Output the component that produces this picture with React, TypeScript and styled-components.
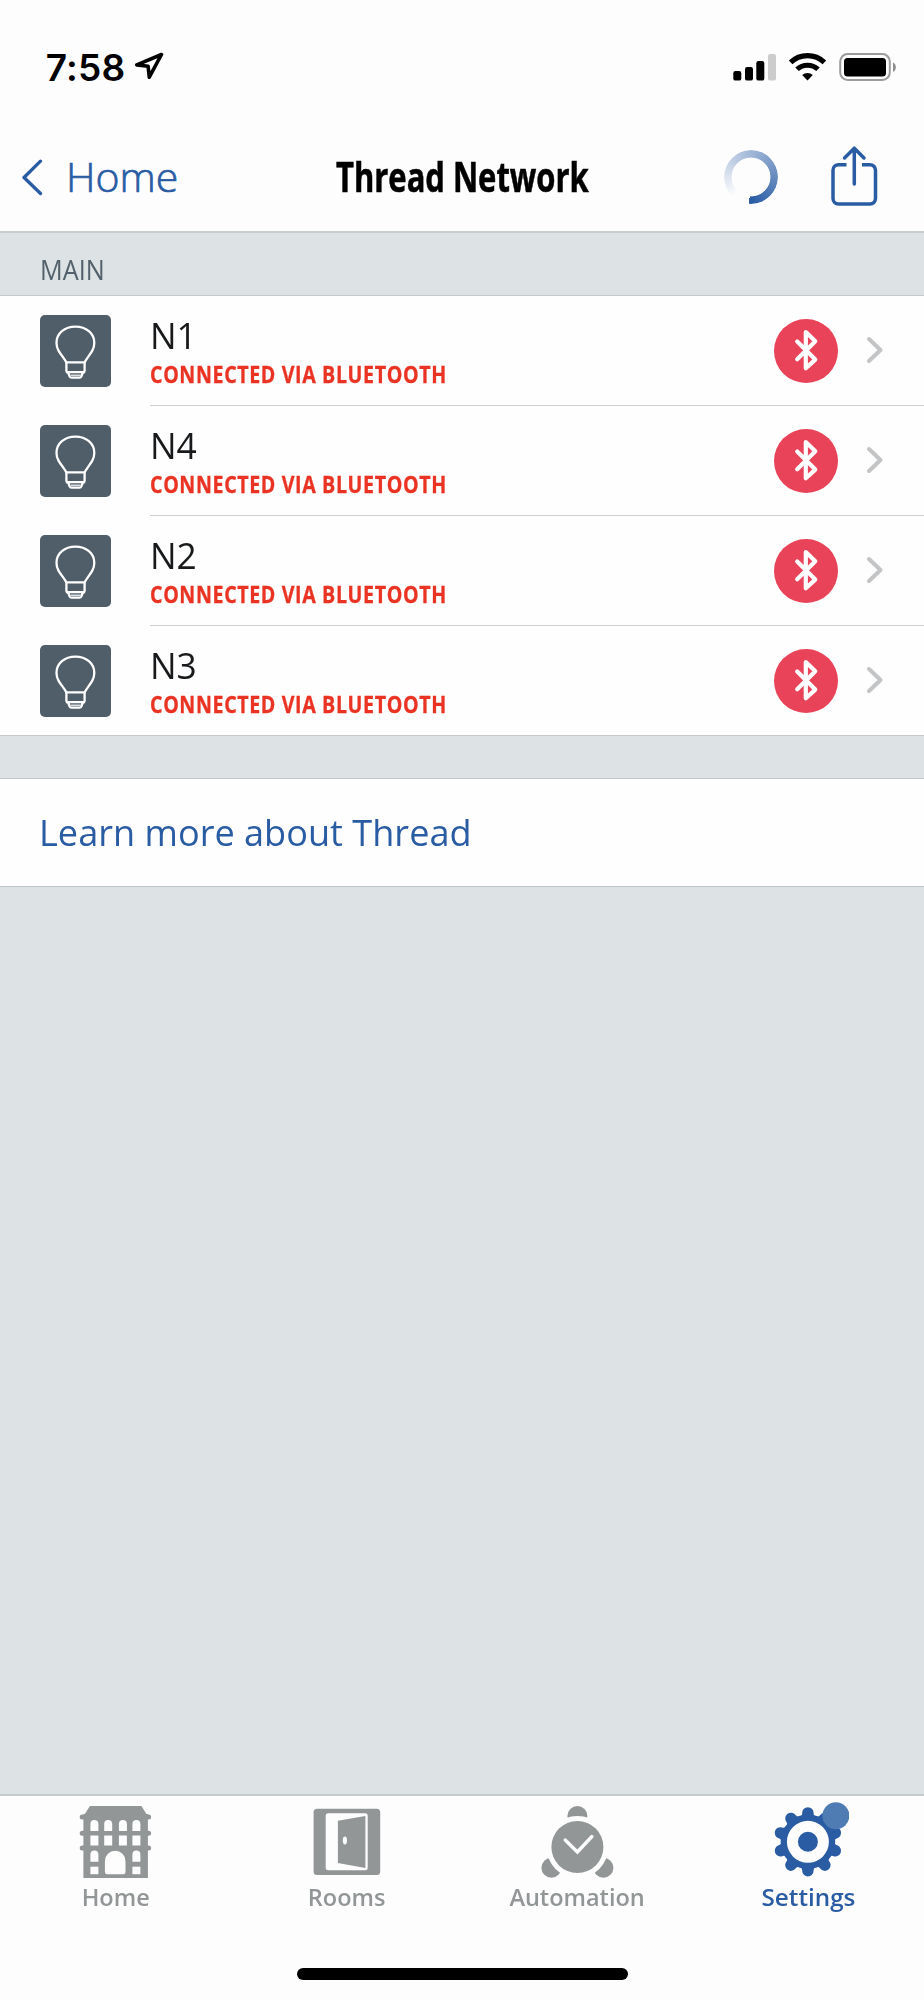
import React from "react";
import styled, { createGlobalStyle } from "styled-components";

const blue = "#2a5ca4";
const grey = "#929697";

const Global = createGlobalStyle`
  * { box-sizing: border-box; }
  body { margin: 0; background: #dde2e4; font-family: "Open Sans", "Noto Sans", sans-serif; }
`;

const Screen = styled.div`
  width: 924px;
  height: 2000px;
  display: flex;
  flex-direction: column;
  background: #dde2e4;
  overflow: hidden;
`;

const Header = styled.header`
  height: 233px;
  background: #fdfdfe;
  border-bottom: 2px solid #c8cdce;
`;

const StatusBar = styled.div`
  height: 122px;
  padding: 45px 28px 0 45.7px;
  display: flex;
  align-items: flex-start;
  justify-content: space-between;
`;

const Clock = styled.div`
  display: flex;
  gap: 9px;
  font: 600 37px/45px Inter, sans-serif;
  letter-spacing: 0.2px;
  color: #000;
`;

const StatusGlyphs = styled.svg`
  margin-top: 6px;
`;

const NavBar = styled.nav`
  height: 109px;
  padding: 0 46px 0 22px;
  display: grid;
  grid-template-columns: 260px 1fr 236px;
`;

const Stretch = styled.span<{ $x: number; $origin?: string }>`
  display: inline-block;
  white-space: nowrap;
  transform: scaleX(${(p) => p.$x});
  transform-origin: ${(p) => p.$origin ?? "left"} center;
`;

const Back = styled.div`
  display: flex;
  align-items: flex-start;
  gap: 23px;
  padding-top: 26px;
  font-size: 41px;
  font-weight: 300;
  line-height: 56px;
  color: ${blue};
  -webkit-text-stroke: 0.7px ${blue};
  svg { margin-top: 11px; }
`;

const Title = styled.h1`
  margin: 0;
  padding-top: 26px;
  display: flex;
  justify-content: center;
  font-size: 41px;
  font-weight: 700;
  line-height: 56px;
  color: #000;
  -webkit-text-stroke: 0.6px #000;
`;

const Actions = styled.div`
  display: flex;
  justify-content: flex-end;
  gap: 52px;
  padding-top: 23px;
`;

const Spinner = styled.div`
  width: 54px;
  height: 54px;
  margin-top: 4.5px;
  border-radius: 50%;
  background: conic-gradient(from 184deg, rgba(42, 92, 164, 0) 38deg, ${blue} 356deg);
  mask: radial-gradient(circle, transparent 19px, #000 19.8px);
`;

const SectionTitle = styled.div`
  height: 63px;
  padding: 18.5px 39.5px 0;
  border-bottom: 1px solid #c5cacc;
  font-size: 27px;
  line-height: 36px;
  color: #52616c;
`;

const List = styled.div`
  background: #fefefe;
  border-bottom: 1px solid #c4c8ca;
`;

const Row = styled.div`
  height: 110px;
  padding-left: 39.5px;
  display: flex;
  align-items: flex-start;
  &:last-child { height: 109px; }
`;

const DeviceIcon = styled.div`
  width: 71.5px;
  height: 71.5px;
  margin: 19px 39px 0 0;
  border-radius: 5px;
  background: #505e69;
`;

const RowBody = styled.div`
  flex: 1;
  height: 100%;
  display: flex;
  border-bottom: 1px solid #cfd0d1;
  ${Row}:last-child & { border-bottom: 0; }
`;

const Names = styled.div`
  flex: 1;
  padding-top: 17px;
`;

const Name = styled.div`
  font-size: 37px;
  line-height: 44px;
  color: #17191b;
`;

const Status = styled.div`
  margin-top: 4px;
  font-size: 22.5px;
  font-weight: 700;
  line-height: 28px;
  letter-spacing: 0.7px;
  color: #ea3323;
  -webkit-text-stroke: 0.3px #ea3323;
`;

const Badge = styled.div`
  width: 64.6px;
  height: 64.6px;
  margin: 22.5px 27.6px 0 0;
  border-radius: 50%;
  background: #e94359;
`;

const Disclosure = styled.svg`
  margin: 40px 40px 0 0;
`;

const LearnMore = styled.div`
  height: 109px;
  margin-top: 42px;
  padding: 25px 39px 0;
  border-top: 1px solid #bfc4c7;
  border-bottom: 1px solid #bfc4c7;
  background: #fefefe;
  font-size: 37px;
  line-height: 56px;
  color: ${blue};
`;

const TabBar = styled.footer`
  height: 206px;
  margin-top: auto;
  border-top: 2px solid #c5cacd;
  background: #fdfdfe;
  display: flex;
  flex-direction: column;
  align-items: center;
`;

const Tabs = styled.div`
  width: 100%;
  height: 172px;
  display: grid;
  grid-template-columns: repeat(4, 1fr);
`;

const Tab = styled.div<{ $active?: boolean }>`
  padding-top: 4px;
  display: flex;
  flex-direction: column;
  align-items: center;
  color: ${(p) => (p.$active ? blue : grey)};
  font-size: 24px;
  font-weight: 600;
  line-height: 30px;
  svg { margin-bottom: 2px; }
`;

const HomeIndicator = styled.div`
  width: 331px;
  height: 12px;
  border-radius: 6px;
  background: #000;
`;

const Location = () => (
  <svg width="31" height="34" viewBox="0 0 31 34">
    <path d="M27.500 9.500 2.800 19.900 14.100 21.200 15.300 32.200Z" fill="none" stroke="#000" strokeWidth="3.600" strokeLinejoin="round" />
  </svg>
);

const StatusIcons = () => (
  <StatusGlyphs width="166" height="32" viewBox="730 51 166 32">
    <rect x="733.3" y="71" width="8" height="9.6" rx="2.2" />
    <rect x="745" y="67" width="8" height="13.6" rx="2.2" />
    <rect x="756.3" y="61" width="8" height="19.6" rx="2.2" />
    <rect x="768" y="54" width="8" height="26.6" rx="2.2" fill="#cccccd" />
    <path d="M790.6 62.4a24.5 24.5 0 0 1 33.8 0" fill="none" stroke="#000" strokeWidth="5.2" />
    <path d="M797 69.3a15.3 15.3 0 0 1 21 0" fill="none" stroke="#000" strokeWidth="5" />
    <path d="M802.2 75a8 8 0 0 1 10.6 0l-5.3 5.5z" />
    <rect x="840.2" y="54" width="49.6" height="26" rx="7.5" fill="none" stroke="#9b9d9c" strokeWidth="2" />
    <rect x="844" y="58" width="42" height="18.6" rx="3.6" />
    <path d="M893 62.5c3.8 1.4 3.8 7.9 0 9.3z" fill="#8d8f8e" />
  </StatusGlyphs>
);

const BackArrow = () => (
  <svg width="21" height="37" viewBox="0 0 21 37">
    <path d="M18.500 2.200 2 18.500 18.500 34.500" fill="none" stroke={blue} strokeWidth="3.300" strokeLinecap="round" strokeLinejoin="round" />
  </svg>
);

const Share = () => (
  <svg width="48" height="62" viewBox="0 0 48 62" fill="none" stroke={blue} strokeWidth="3.500" strokeLinecap="round" strokeLinejoin="round">
    <path d="M16.500 19.700H8.500A5.500 5.500 0 0 0 3 25.200V53.500A5.500 5.500 0 0 0 8.500 59H40A5.500 5.500 0 0 0 45.500 53.500V25.200A5.500 5.500 0 0 0 40 19.700H32" strokeLinecap="butt" />
    <path d="M24.300 39V3.500M14.500 13 24.300 3.200 34 13" />
  </svg>
);

const Bulb = () => (
  <svg width="72" height="72" viewBox="0.4 -0.4 72 72" fill="none" stroke="#fff" strokeWidth="2.300" strokeLinejoin="round">
    <path d="M26.800 47C25 43.500 21 39 18.900 35.200C17.500 32.600 16.900 30 16.900 27.500C16.900 18 25 11.300 35.800 11.300C46.600 11.300 54.700 18 54.700 27.500C54.700 30 54.100 32.600 52.700 35.200C50.600 39 46.800 43.500 45 47Z" />
    <path d="M26.800 47V55Q26.800 57 28.800 57.600L30 61Q30.500 62.300 32 62.300H39.800Q41.300 62.300 41.800 61L43 57.600Q45 57 45 55V47M28 56.800H44" />
    <path d="M31 59.800H41" strokeWidth="1.200" />
  </svg>
);

const Bluetooth = () => (
  <svg width="65" height="65" viewBox="0 0 65 65">
    <path d="M23.200 22.500 41.300 40.600 31.800 49.300V13L41.300 22.300 23.200 40.200" fill="none" stroke="#fff" strokeWidth="4.200" strokeLinecap="round" strokeLinejoin="round" />
  </svg>
);

const HomeIcon = () => (
  <svg width="80" height="80" viewBox="0.6 0 80 80">
    <g fill={grey}>
      <path d="M14.500 6H66L71 14H72.500V78H8V14H9.500Z" />
      <rect x="4.300" y="14.500" width="71.400" height="5" rx="2.500" />
      <rect x="4.300" y="30.700" width="71.400" height="5" rx="2.500" />
      <rect x="4.300" y="45.500" width="71.400" height="5" rx="2.500" />
    </g>
    <g fill="#fdfdfe">
      {[15, 28.8, 43.5, 57].map((x) => (
        <React.Fragment key={x}>
          <path d={`M${x} 31V24a4 4 0 0 1 8 0v7z`} />
          <rect x={x} y="35.500" width="8" height="10" />
        </React.Fragment>
      ))}
      {[15, 57].map((x) => (
        <React.Fragment key={x}>
          <path d={`M${x} 61.700V54.500a4 4 0 0 1 8 0v7.200z`} />
          <rect x={x} y="66.700" width="8" height="7.500" />
        </React.Fragment>
      ))}
      <path d="M29.500 72V61a10.300 10.300 0 0 1 20.600 0V72a2.300 2.300 0 0 1-2.300 2.300h-16a2.300 2.300 0 0 1-2.300-2.300z" />
    </g>
  </svg>
);

const RoomsIcon = () => (
  <svg width="80" height="80" viewBox="0.6 0 80 80">
    <rect x="7.200" y="8.700" width="66.600" height="66.300" rx="3.500" fill={grey} />
    <rect x="19.300" y="13.200" width="42" height="57" rx="2.500" fill="#fdfdfe" />
    <path d="M31.500 20.800 59 16V68L31.500 63Z" fill={grey} />
    <ellipse cx="38.500" cy="40.500" rx="2.100" ry="4" fill="#fdfdfe" />
  </svg>
);

const AutomationIcon = () => (
  <svg width="80" height="80" viewBox="0.6 0 80 80">
    <g fill={grey}>
      <circle cx="40" cy="16" r="10" />
      <circle cx="14" cy="67.700" r="10" />
      <circle cx="66" cy="67.700" r="10" />
    </g>
    <circle cx="40" cy="47" r="31" fill="#fdfdfe" />
    <circle cx="40" cy="47" r="26" fill={grey} />
    <path d="M27.800 40 40 52 54.500 36.500" fill="none" stroke="#fdfdfe" strokeWidth="3.400" strokeLinecap="round" />
  </svg>
);

const SettingsIcon = () => (
  <svg width="80" height="80" viewBox="0.6 0 80 80">
    <g fill={blue}>
      <circle cx="39.500" cy="41.800" r="27.300" />
      {Array.from({ length: 10 }, (_, i) => (
        <path key={i} transform={`rotate(${i * 36} 39.500 41.800)`} d="M30 17.500Q33.800 16.500 33.800 12.900A5.700 5.700 0 0 1 45.200 12.900Q45.200 16.500 49 17.500Z" />
      ))}
    </g>
    <circle cx="39.500" cy="41.800" r="21" fill="#fdfdfe" />
    <circle cx="39.500" cy="41.800" r="10" fill={blue} />
    <circle cx="67.500" cy="15.700" r="13.500" fill="#4f7cb3" />
  </svg>
);

const devices = ["N1", "N4", "N2", "N3"];

export default function App() {
  return (
    <Screen>
      <Global />
      <Header>
        <StatusBar>
          <Clock>7:58 <Location /></Clock>
          <StatusIcons />
        </StatusBar>
        <NavBar>
          <Back><BackArrow /><Stretch $x={1}>Home</Stretch></Back>
          <Title><Stretch $x={0.755} $origin="center">Thread Network</Stretch></Title>
          <Actions><Spinner /><Share /></Actions>
        </NavBar>
      </Header>
      <SectionTitle><Stretch $x={0.935}>MAIN</Stretch></SectionTitle>
      <List>
        {devices.map((name) => (
          <Row key={name}>
            <DeviceIcon><Bulb /></DeviceIcon>
            <RowBody>
              <Names>
                <Name><Stretch $x={0.955}>{name}</Stretch></Name>
                <Status><Stretch $x={0.873}>CONNECTED VIA BLUETOOTH</Stretch></Status>
              </Names>
              <Badge><Bluetooth /></Badge>
              <Disclosure width="18" height="28" viewBox="0 0 18 28">
                <path d="M3 3 14.500 14 3 25" fill="none" stroke="#c3c4c6" strokeWidth="4" strokeLinecap="round" strokeLinejoin="round" />
              </Disclosure>
            </RowBody>
          </Row>
        ))}
      </List>
      <LearnMore><Stretch $x={0.976}>Learn more about Thread</Stretch></LearnMore>
      <TabBar>
        <Tabs>
          <Tab><HomeIcon /><Stretch $x={0.98} $origin="center">Home</Stretch></Tab>
          <Tab><RoomsIcon /><Stretch $x={0.98} $origin="center">Rooms</Stretch></Tab>
          <Tab><AutomationIcon /><Stretch $x={0.98} $origin="center">Automation</Stretch></Tab>
          <Tab $active><SettingsIcon /><Stretch $x={1.01} $origin="center">Settings</Stretch></Tab>
        </Tabs>
        <HomeIndicator />
      </TabBar>
    </Screen>
  );
}
